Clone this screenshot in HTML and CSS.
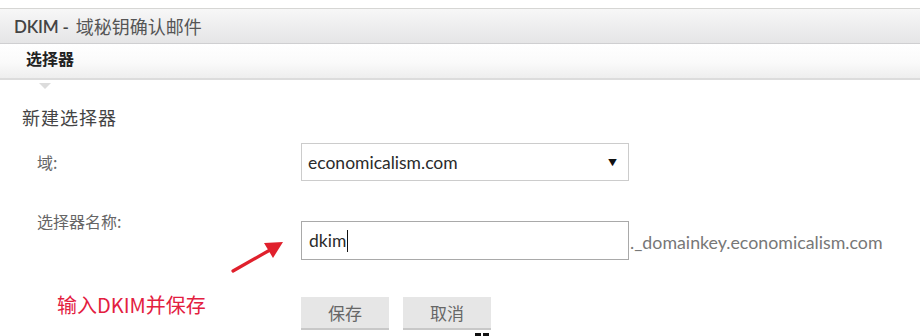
FILE: index.html
```html
<!DOCTYPE html>
<html lang="zh-CN">
<head>
<meta charset="utf-8">
<title>DKIM</title>
<link rel="stylesheet" href="styles.css">
</head>
<body>
<div class="page">
  <div class="header"><span class="title-en">DKIM - </span><span class="title-cn">域秘钥确认邮件</span></div>
  <div class="tabs">
    <div class="tab">选择器<span class="pointer"></span></div>
  </div>
  <div class="content">
    <h2 class="section-title">新建选择器</h2>
    <div class="form">
      <div class="row row-domain">
        <label class="label">域:</label>
        <div class="select"><span class="select-value">economicalism.com</span><span class="select-arrow">▼</span></div>
      </div>
      <div class="row row-name">
        <label class="label label-top">选择器名称:</label>
        <div class="field">
          <div class="input"><span class="input-value">dkim</span><span class="caret"></span></div>
          <span class="suffix">._domainkey.economicalism.com</span>
        </div>
      </div>
      <div class="row row-actions">
        <div class="note">输入DKIM并保存</div>
        <div class="buttons">
          <button class="btn">保存</button>
          <button class="btn">取消</button>
        </div>
      </div>
    </div>
    <svg class="arrow" width="64" height="40" viewBox="0 0 64 40">
      <line x1="5" y1="34" x2="42" y2="13" stroke="#e0202c" stroke-width="3.2" stroke-linecap="round"/>
      <polygon points="55,5 36,6 45,21" fill="#e0202c"/>
    </svg>
    <div class="cutoff"><span></span><span></span></div>
  </div>
</div>
</body>
</html>
```
FILE: styles.css
```css
html, body {
  margin: 0;
  padding: 0;
  background: #fff;
}
body {
  font-family: Lato, "Noto Sans", "Noto Sans CJK SC", sans-serif;
  color: #333;
  width: 920px;
  height: 336px;
  overflow: hidden;
}
.page {
  position: relative;
  padding-top: 8px;
}
.header {
  height: 34px;
  border-top: 1px solid #d6d6d4;
  border-bottom: 1px solid #cfcfd1;
  background: linear-gradient(#f7f7f7, #e5e5e6);
  display: flex;
  align-items: center;
  padding-left: 14px;
  color: #444;
}
.title-en {
  font-family: Lato, "Noto Sans", sans-serif;
  font-size: 17px;
  font-weight: 600;
  white-space: pre;
  letter-spacing: -0.2px;
}
.title-cn {
  font-family: "Noto Sans CJK SC", sans-serif;
  font-size: 18px;
  color: #555;
  margin-left: 3px;
}
.tabs {
  height: 34px;
  background: linear-gradient(#ffffff, #fafafa 55%, #eeeeee);
  border-bottom: 2px solid #dcdcdc;
  padding-left: 26px;
  display: flex;
  align-items: center;
}
.tab {
  position: relative;
  font-family: "Noto Sans CJK SC", sans-serif;
  font-weight: 700;
  font-size: 16px;
  color: #222;
  line-height: 20px;
  margin-top: -6px;
}
.pointer {
  position: absolute;
  left: 13px;
  top: 35px;
  width: 0;
  height: 0;
  border-left: 6px solid transparent;
  border-right: 6px solid transparent;
  border-top: 6px solid #dcdcdc;
}
.content {
  position: relative;
  padding: 25px 0 0 22px;
}
.section-title {
  margin: 0;
  font-family: "Noto Sans CJK SC", sans-serif;
  font-weight: 400;
  font-size: 18px;
  letter-spacing: 1px;
  line-height: 24px;
  color: #444;
}
.form {
  padding-left: 15px;
  margin-top: 14px;
}
.row {
  display: grid;
  grid-template-columns: 264px auto;
}
.label {
  font-family: "Noto Sans CJK SC", sans-serif;
  font-size: 16px;
  color: #666;
  line-height: 20px;
}
.row-domain {
  align-items: center;
}
.select {
  box-sizing: border-box;
  width: 328px;
  height: 38px;
  border: 1px solid #cccccc;
  display: flex;
  align-items: center;
  justify-content: space-between;
  padding: 0 11px 0 6px;
}
.select-value, .input-value {
  font-family: Lato, "Noto Sans", sans-serif;
  font-size: 17.5px;
  color: #2b2b2b;
}
.select-arrow {
  font-size: 9px;
  color: #111;
}
.row-name {
  margin-top: 40px;
}
.label-top {
  margin-top: -10px;
}
.field {
  display: flex;
  align-items: center;
}
.input {
  box-sizing: border-box;
  width: 328px;
  height: 39px;
  border: 1px solid #a9a9a9;
  display: flex;
  align-items: center;
  padding: 0 0 0 7px;
}
.caret {
  display: inline-block;
  width: 1px;
  height: 22px;
  background: #111;
  margin-left: 1px;
}
.suffix {
  font-family: Lato, "Noto Sans", sans-serif;
  font-size: 17.8px;
  color: #777;
  margin-left: 1px;
  margin-top: 2px;
}
.row-actions {
  margin-top: 37px;
  align-items: start;
}
.note {
  font-family: "Noto Sans CJK SC", sans-serif;
  font-size: 20px;
  color: #e3203f;
  padding-left: 20px;
  line-height: 24px;
  margin-top: -4px;
}
.buttons {
  display: flex;
  gap: 14px;
}
.btn {
  width: 88px;
  height: 33px;
  border: none;
  border-bottom: 2px solid #c8c8c8;
  background: #e6e6e6;
  font-family: "Noto Sans CJK SC", sans-serif;
  font-size: 17px;
  color: #666;
  padding: 0;
  margin: 0;
}
.arrow {
  position: absolute;
  left: 228px;
  top: 157px;
}
.cutoff {
  position: absolute;
  left: 475px;
  top: 253px;
  display: flex;
  gap: 2px;
}
.cutoff span {
  width: 6px;
  height: 4px;
  background: #111;
}
```
